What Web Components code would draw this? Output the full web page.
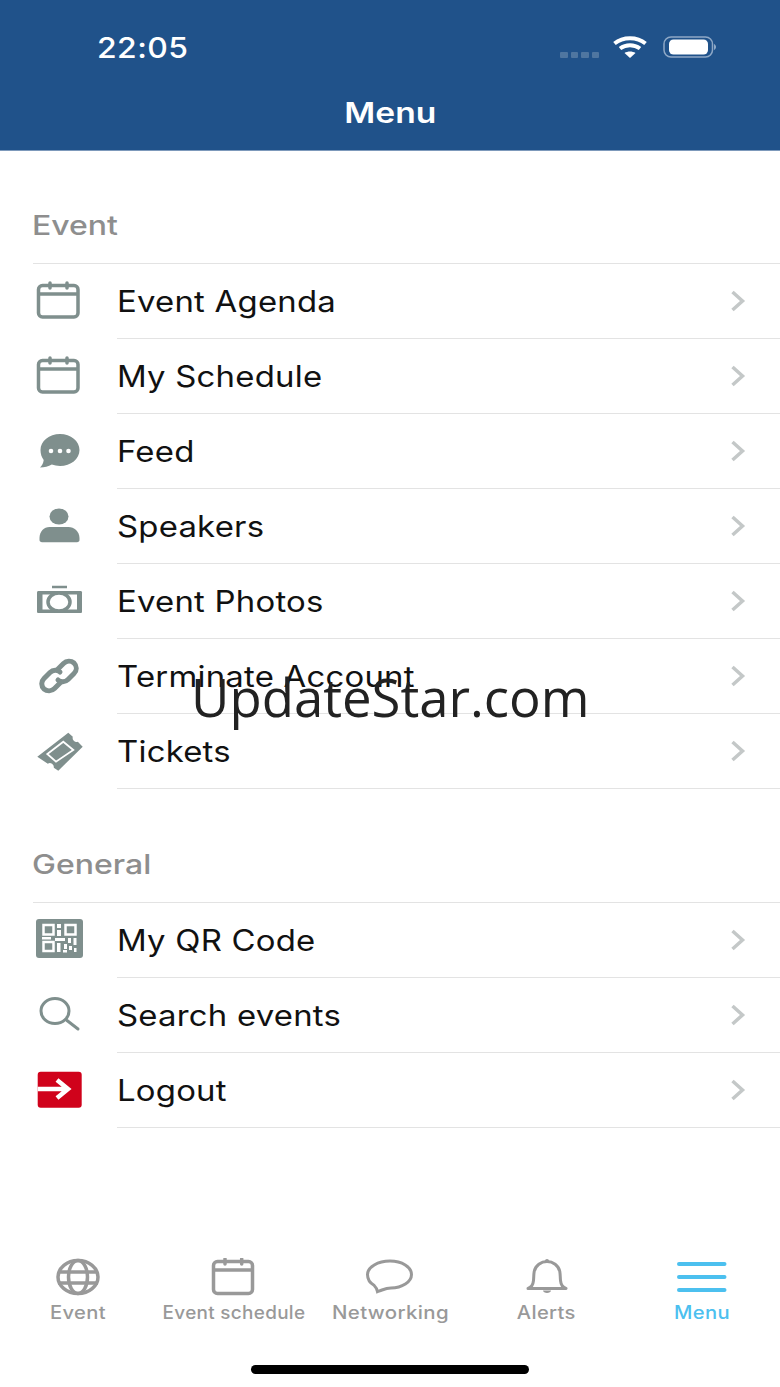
<!DOCTYPE html>
<html>
<head>
<meta charset="utf-8">
<title>Menu</title>
<style>
  html, body { margin: 0; background: #fff; }
  body { font-family: "Inter", "Liberation Sans", sans-serif; }
</style>
</head>
<body>

<app-screen>
  <app-header slot="header" time="22:05" title="Menu"></app-header>

  <menu-section title="Event">
    <menu-row label="Event Agenda">
      <svg slot="icon" viewBox="0 0 52 52" width="52" height="52" fill="none" stroke="currentColor" stroke-width="3.5"><rect x="5.5" y="10.500" width="39.5" height="31.500" rx="4"/><path d="M5.5 19h39.500"/><path d="M17 8v5M34 8v5" stroke-linecap="round"/></svg>
    </menu-row>
    <menu-row label="My Schedule">
      <svg slot="icon" viewBox="0 0 52 52" width="52" height="52" fill="none" stroke="currentColor" stroke-width="3.5"><rect x="5.5" y="10.500" width="39.5" height="31.500" rx="4"/><path d="M5.5 19h39.500"/><path d="M17 8v5M34 8v5" stroke-linecap="round"/></svg>
    </menu-row>
    <menu-row label="Feed">
      <svg slot="icon" viewBox="0 0 52 52" width="52" height="52"><path fill="currentColor" d="M27 9c10.800 0 19.500 7 19.500 16S37.800 41 27 41c-2.900 0-5.700-.5-8.200-1.400C15.500 41.500 11.500 42.500 7 42.500c2-2 3.400-4.500 3.700-7.500C8.600 32.300 7.500 28.900 7.500 25 7.500 16 16.200 9 27 9z"/><g fill="#fff"><circle cx="18" cy="26" r="2.300"/><circle cx="27" cy="26" r="2.300"/><circle cx="35.500" cy="26" r="2.300"/></g></svg>
    </menu-row>
    <menu-row label="Speakers">
      <svg slot="icon" viewBox="0 0 52 52" width="52" height="52" fill="currentColor"><ellipse cx="26" cy="16.500" rx="9.500" ry="8"/><path d="M6.500 38c0-6.500 4.500-11 10-11h19c5.500 0 11 4.500 11 11v2c0 1.300-1 2.200-2.500 2.200H9c-1.500 0-2.500-.9-2.500-2.200z"/></svg>
    </menu-row>
    <menu-row label="Event Photos">
      <svg slot="icon" viewBox="0 0 52 52" width="52" height="52"><path fill="currentColor" d="M5.500 16h42c1 0 1.500.6 1.500 1.500v19c0 1-.5 1.500-1.500 1.500h-42c-1 0-1.500-.5-1.500-1.500v-19c0-.9.500-1.500 1.500-1.500z"/><rect x="9.500" y="19.500" width="34.500" height="15" fill="#fff"/><ellipse cx="26" cy="27" rx="11" ry="9" fill="#fff" stroke="currentColor" stroke-width="3.500"/><path d="M19 12h15" stroke="currentColor" stroke-width="2.500"/></svg>
    </menu-row>
    <menu-row label="Terminate Account">
      <svg slot="icon" viewBox="0 0 52 52" width="52" height="52" fill="none" stroke="currentColor" stroke-width="5" stroke-linecap="round"><path d="M24 20l6.500-6.500c3-3 7.500-3 10.500-.5 3 3 3 7.500 0 10.500l-6 6c-3 3-7.500 3-10 .5"/><path d="M28 32l-6.500 6.500c-3 3-7.500 3-10.500.5-3-3-3-7.500 0-10.500l6-6c3-3 7.500-3 10-.5"/></svg>
    </menu-row>
    <menu-row label="Tickets">
      <svg slot="icon" viewBox="0 0 52 52" width="52" height="52"><path fill="currentColor" d="M35.300 7.700l4.500 4a4 4 0 0 0 5 5l4.900 5L25.300 45.700l-4.500-3a4 4 0 0 0-6-4L4.300 31.700z"/><path d="M30.300 16.700l10 8.300L23 36.700 14.300 29z" fill="none" stroke="#fff" stroke-width="1.800"/></svg>
    </menu-row>
  </menu-section>

  <menu-section title="General" style="margin-top:1px">
    <menu-row label="My QR Code">
      <svg slot="icon" viewBox="0 0 52 52" width="52" height="52"><rect x="3" y="5" width="47" height="39" rx="3" fill="currentColor"/><g fill="none" stroke="#fff" stroke-width="2.500"><rect x="10.500" y="11" width="10" height="9.500"/><rect x="32.500" y="11" width="10" height="9.500"/><rect x="10.500" y="28" width="10" height="9"/></g><g fill="#fff"><rect x="24" y="10" width="4" height="4"/><rect x="24" y="16" width="4" height="6"/><rect x="9" y="23" width="9" height="2.500"/><rect x="22" y="24" width="10" height="3"/><rect x="35" y="24" width="3" height="5"/><rect x="40.500" y="24" width="3" height="7"/><rect x="24" y="29" width="3.500" height="9"/><rect x="31" y="30" width="3" height="5"/><rect x="36" y="32" width="3" height="4"/><rect x="30" y="36" width="4" height="2.500"/><rect x="41" y="34" width="2.500" height="4"/></g></svg>
    </menu-row>
    <menu-row label="Search events">
      <svg slot="icon" viewBox="0 0 52 52" width="52" height="52" fill="none" stroke="currentColor" stroke-width="3"><ellipse cx="22" cy="22" rx="14" ry="12.500"/><path d="M34 31.500l11 8.500" stroke-linecap="round"/></svg>
    </menu-row>
    <menu-row label="Logout">
      <svg slot="icon" viewBox="0 0 52 52" width="52" height="52"><rect x="4.700" y="7.700" width="44" height="36" rx="3" fill="#d0021b"/><path d="M4.700 25H35M24 16l11 9-11 9" fill="none" stroke="#fff" stroke-width="4.500"/></svg>
    </menu-row>
  </menu-section>

  <tab-bar slot="footer">
    <tab-item label="Event">
      <svg slot="icon" viewBox="0 0 52 40" width="52" height="40" fill="none" stroke="currentColor" stroke-width="3.5"><ellipse cx="26" cy="19" rx="20" ry="16.500"/><ellipse cx="26" cy="19" rx="9.500" ry="16.500"/><path d="M6 14h40M6 25h40"/></svg>
    </tab-item>
    <tab-item label="Event schedule" style="--sx:1.05">
      <svg slot="icon" viewBox="0 0 52 40" width="52" height="40" fill="none" stroke="currentColor" stroke-width="3.5"><rect x="5.500" y="3.500" width="39" height="32" rx="4"/><path d="M5.500 12h39"/><path d="M17 1v5M33.700 1v5" stroke-linecap="round"/></svg>
    </tab-item>
    <tab-item label="Networking" style="--sx:1.135">
      <svg slot="icon" viewBox="0 0 52 40" width="52" height="40" fill="none" stroke="currentColor" stroke-width="3"><path d="M26 3c12 0 21.500 6 21.500 13.500S38 30 27 30c-3 0-6 .8-9 2-2 .8-3.500 1.300-4.500 1.700-.5-2.500-2-5-3.500-6.500C6 25 3.500 21 3.500 16.500 3.500 9 14 3 26 3z"/></svg>
    </tab-item>
    <tab-item label="Alerts">
      <svg slot="icon" viewBox="0 0 52 40" width="52" height="40" fill="none" stroke="currentColor" stroke-width="3"><path d="M8 30.500c3-1 5-3 5.500-8 .3-3 .2-6 .7-9C15.500 7.500 21 3.500 27 3.500s11.500 4 12.800 10c.5 3 .4 6 .7 9 .5 5 2.500 7 5.500 8z" stroke-linejoin="round"/><circle cx="27" cy="3" r="2" fill="currentColor" stroke="none"/><path d="M23 32.500h8c0 1.500-2 2.500-4 2.500s-4-1-4-2.500z" fill="currentColor" stroke="none"/></svg>
    </tab-item>
    <tab-item label="Menu" active>
      <svg slot="icon" viewBox="0 0 52 40" width="52" height="40" fill="none" stroke="currentColor" stroke-width="4" stroke-linecap="round"><path d="M3 6h45.500M3 19h45.500M3 32h45.500"/></svg>
    </tab-item>
  </tab-bar>

  <home-bar slot="footer"></home-bar>
</app-screen>

<water-mark>UpdateStar.com</water-mark>

<script>
// small helper so every class reads the same
function shadow(el, html) {
  el.attachShadow({ mode: "open" }).innerHTML = html;
}

class AppScreen extends HTMLElement {
  constructor() {
    super();
    shadow(this, `
<style>
:host { display: flex; flex-direction: column; height: 1387px; overflow: hidden; background: #fff; }
main { flex: 1; }
</style>
<slot name="header"></slot>
<main><slot></slot></main>
<slot name="footer"></slot>`);
  }
}

class AppHeader extends HTMLElement {
  connectedCallback() {
    if (this.shadowRoot) return;
    shadow(this, `
<style>
:host { display: block; height: 150px; background: #20528a; border-bottom: 1px solid #7d99bb; color: #fff; }
.status { display: flex; align-items: center; justify-content: space-between; height: 94px; padding: 0 64px 0 97px; }
.time { display: inline-block; font-size: 29px; font-weight: 500; letter-spacing: .4px; transform: scaleX(1.1); transform-origin: left; }
.sys { display: flex; align-items: center; }
.dots { display: flex; gap: 3px; margin: 16px 14px 0 0; }
.dots i { width: 7.500px; height: 6px; border-radius: 1px; background: #4f76a0; }
.wifi { margin-right: 16px; }
h1 { margin: -1px 0 0; font-size: 28px; font-weight: 600; line-height: 40px; text-align: center; }
h1 span { display: inline-block; transform: scaleX(1.2); }
</style>
<div class="status">
  <span class="time">${this.getAttribute("time")}</span>
  <span class="sys">
    <span class="dots"><i></i><i></i><i></i><i></i></span>
    <svg class="wifi" width="34" height="22" viewBox="0 0 34 22"><path d="M1.500 7.500C10 .5 24 .5 32.500 7.500M7 12.500c6-4.500 14-4.500 20 0" fill="none" stroke="#fff" stroke-width="4"/><path d="M11.500 17c3-2 8-2 11 0L17 22z" fill="#fff"/></svg>
    <svg width="53" height="22" viewBox="0 0 53 22"><rect x="1" y="1" width="48.500" height="20" rx="7" fill="none" stroke="#8ea8c6" stroke-width="1.500"/><rect x="6" y="3.500" width="39" height="15" rx="4.500" fill="#fff"/><path d="M51 8v6c1.200-.6 2-1.800 2-3s-.8-2.400-2-3z" fill="#8ea8c6"/></svg>
  </span>
</div>
<h1><span>${this.getAttribute("title")}</span></h1>`);
  }
}

class MenuSection extends HTMLElement {
  connectedCallback() {
    if (this.shadowRoot) return;
    shadow(this, `
<style>
:host { display: block; }
h2 { box-sizing: border-box; height: 113px; margin: 0 0 0 33px; padding-top: 57px; border-bottom: 1px solid #e3e3e3; font-size: 27px; line-height: 36px; font-weight: 500; color: #8e8e8e; }
h2 span { display: inline-block; margin-left: -1px; transform: scaleX(1.185); transform-origin: left; }
</style>
<h2><span>${this.getAttribute("title")}</span></h2>
<slot></slot>`);
  }
}

class MenuRow extends HTMLElement {
  connectedCallback() {
    if (this.shadowRoot) return;
    shadow(this, `
<style>
:host { display: flex; height: 75px; padding-left: 33px; color: #7f8f8d; }
.icon { flex: 0 0 84px; display: flex; align-items: center; padding-bottom: 1px; box-sizing: border-box; }
.icon ::slotted(svg) { display: block; }
.body { flex: 1; box-sizing: border-box; display: flex; align-items: center; justify-content: space-between; border-bottom: 1px solid #e3e3e3; padding-right: 33px; }
.label { display: inline-block; font-size: 29.500px; color: #111; letter-spacing: .2px; transform: scaleX(1.115); transform-origin: left; }
</style>
<span class="icon"><slot name="icon"></slot></span>
<div class="body">
  <span class="label">${this.getAttribute("label")}</span>
  <svg width="18" height="24" viewBox="0 0 18 24"><path d="M3.500 3l10 9-10 9" fill="none" stroke="#c4c8c8" stroke-width="3.500"/></svg>
</div>`);
  }
}

class TabBar extends HTMLElement {
  constructor() {
    super();
    shadow(this, `
<style>
:host { display: grid; grid-template-columns: repeat(5, 156px); }
</style>
<slot></slot>`);
  }
}

class TabItem extends HTMLElement {
  connectedCallback() {
    if (this.shadowRoot) return;
    shadow(this, `
<style>
:host { display: flex; flex-direction: column; align-items: center; color: #999; }
:host([active]) { color: #4cc0ef; }
.label { display: inline-block; font-size: 18px; font-weight: 500; line-height: 24px; margin-top: 3px; letter-spacing: .3px; white-space: nowrap; transform: scaleX(var(--sx, 1.12)); }
::slotted(svg) { display: block; }
</style>
<slot name="icon"></slot>
<span class="label">${this.getAttribute("label")}</span>`);
  }
}

class HomeBar extends HTMLElement {
  constructor() {
    super();
    shadow(this, `
<style>
:host { display: flex; justify-content: center; padding: 40px 0 13px; }
i { display: block; width: 278px; height: 9px; border-radius: 4.500px; background: #000; }
</style>
<i></i>`);
  }
}

class WaterMark extends HTMLElement {
  constructor() {
    super();
    shadow(this, `
<style>
:host { position: absolute; left: 191px; top: 663px; font: 52.700px/68px "Open Sans", sans-serif; color: #222; white-space: nowrap; }
</style>
<slot></slot>`);
  }
}

customElements.define("app-screen", AppScreen);
customElements.define("app-header", AppHeader);
customElements.define("menu-section", MenuSection);
customElements.define("menu-row", MenuRow);
customElements.define("tab-bar", TabBar);
customElements.define("tab-item", TabItem);
customElements.define("home-bar", HomeBar);
customElements.define("water-mark", WaterMark);
</script>
</body>
</html>
